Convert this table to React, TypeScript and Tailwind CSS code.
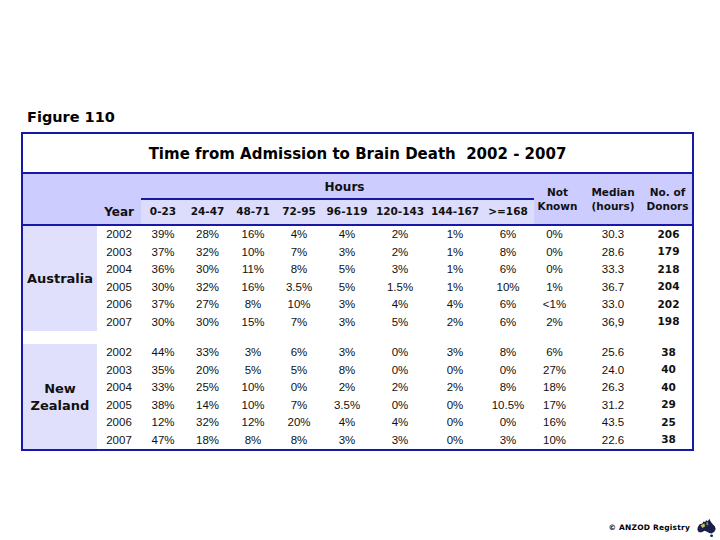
import React from "react";

type Row = string[];

const AUSTRALIA: Row[] = [
  ["2002", "39%", "28%", "16%", "4%", "4%", "2%", "1%", "6%", "0%", "30.3", "206"],
  ["2003", "37%", "32%", "10%", "7%", "3%", "2%", "1%", "8%", "0%", "28.6", "179"],
  ["2004", "36%", "30%", "11%", "8%", "5%", "3%", "1%", "6%", "0%", "33.3", "218"],
  ["2005", "30%", "32%", "16%", "3.5%", "5%", "1.5%", "1%", "10%", "1%", "36.7", "204"],
  ["2006", "37%", "27%", "8%", "10%", "3%", "4%", "4%", "6%", "<1%", "33.0", "202"],
  ["2007", "30%", "30%", "15%", "7%", "3%", "5%", "2%", "6%", "2%", "36,9", "198"],
];

const NEW_ZEALAND: Row[] = [
  ["2002", "44%", "33%", "3%", "6%", "3%", "0%", "3%", "8%", "6%", "25.6", "38"],
  ["2003", "35%", "20%", "5%", "5%", "8%", "0%", "0%", "0%", "27%", "24.0", "40"],
  ["2004", "33%", "25%", "10%", "0%", "2%", "2%", "2%", "8%", "18%", "26.3", "40"],
  ["2005", "38%", "14%", "10%", "7%", "3.5%", "0%", "0%", "10.5%", "17%", "31.2", "29"],
  ["2006", "12%", "32%", "12%", "20%", "4%", "4%", "0%", "0%", "16%", "43.5", "25"],
  ["2007", "47%", "18%", "8%", "8%", "3%", "3%", "0%", "3%", "10%", "22.6", "38"],
];

const HOURS = ["0-23", "24-47", "48-71", "72-95", "96-119", "120-143", "144-167", ">=168"];

const COLS =
  "grid grid-cols-[74px_44px_44px_45px_46px_46px_50px_56px_54px_52px_41px_76px_41px]";
const BOLD = "font-['DejaVu_Sans',sans-serif] font-bold";

function CountryBlock({ label, rows }: { label: React.ReactNode; rows: Row[] }) {
  return (
    <div className={COLS}>
      <div
        className={`row-span-6 flex items-center justify-center bg-[#e0e0fc] text-center text-[13px] leading-[17px] text-[#111] ${BOLD}`}
      >
        {label}
      </div>
      {rows.map((r) =>
        r.map((v, i) => (
          <div
            key={r[0] + "-" + i}
            className={
              i === r.length - 1
                ? `flex h-[17.5px] items-center justify-center pr-[6px] text-[10.5px] text-[#111] ${BOLD}`
                : "flex h-[17.5px] items-center justify-center text-[11.5px] text-[#111]"
            }
          >
            {v}
          </div>
        ))
      )}
    </div>
  );
}

function AusMap() {
  return (
    <svg width="22" height="22" viewBox="0 0 24 22">
      <path
        d="M2 10 L4 7 L7 6 L8 4 L10 4.5 L11 2.5 L13 3.5 L14.5 1 L16 4 L18 6.5 L20.5 9 L21.5 12 L20 15 L17 17 L14.5 16.5 L12 15 L9.5 14 L6 15.5 L3 15.5 L1.5 13 Z"
        fill="#1a1f4a"
      />
      <path d="M5 8 L9 6 L10 9 L7 11 Z" fill="#c9c25a" />
      <path d="M11 5 L13 4.5 L13.5 8 L11.5 8 Z" fill="#6c9a4a" />
      <ellipse cx="17" cy="19.5" rx="1.6" ry="1.4" fill="#1a1f4a" />
    </svg>
  );
}

export default function App() {
  return (
    <div className="flex h-[540px] w-[720px] flex-col bg-white font-['Liberation_Sans',Arial,sans-serif]">
      <div className={`pl-[27px] pt-[108px] text-[14.5px] leading-[18px] text-black ${BOLD}`}>
        Figure 110
      </div>

      <div className="ml-[21px] mt-[6px] w-[673px] border-2 border-[#1818a8]">
        {/* title */}
        <div
          className={`flex h-[40px] items-center justify-center whitespace-pre border-b-2 border-[#1818a8] pt-[2px] text-[15px] text-black ${BOLD}`}
        >
          Time from Admission to Brain Death  2002 - 2007
        </div>

        {/* header */}
        <div className={`${COLS} border-b-2 border-[#1818a8] bg-[#ccccff] text-[#111] ${BOLD}`}>
          <div className="col-span-2 row-span-2 flex items-end justify-end pb-[3px] pr-[7px] text-[12px]">
            Year
          </div>
          <div className="col-span-8 flex h-[26px] items-center justify-center border-b-2 border-[#1818a8] pl-[14px] pt-[1px] text-[12px]">
            Hours
          </div>
          <div className="row-span-2 flex flex-col items-center justify-center whitespace-nowrap pl-[6px] text-[10.5px] leading-[14px]">
            <span>Not</span>
            <span>Known</span>
          </div>
          <div className="row-span-2 flex flex-col items-center justify-center whitespace-nowrap text-[10.5px] leading-[14px]">
            <span>Median</span>
            <span>(hours)</span>
          </div>
          <div className="row-span-2 flex flex-col items-center justify-center whitespace-nowrap pr-[8px] text-[10.5px] leading-[14px]">
            <span>No. of</span>
            <span>Donors</span>
          </div>
          {HOURS.map((h) => (
            <div
              key={h}
              className="flex h-[24px] items-center justify-center bg-[#dcdcfc] text-[10.5px]"
            >
              {h}
            </div>
          ))}
        </div>

        <CountryBlock label="Australia" rows={AUSTRALIA} />
        <div className="h-[13px]" />
        <CountryBlock
          label={
            <span>
              New
              <br />
              Zealand
            </span>
          }
          rows={NEW_ZEALAND}
        />
      </div>

      <div className="mt-auto flex items-center justify-end pb-[1px] pr-[2px]">
        <span className={`mr-[6px] text-[7.5px] tracking-[0.2px] text-black ${BOLD}`}>
          © ANZOD Registry
        </span>
        <AusMap />
      </div>
    </div>
  );
}
